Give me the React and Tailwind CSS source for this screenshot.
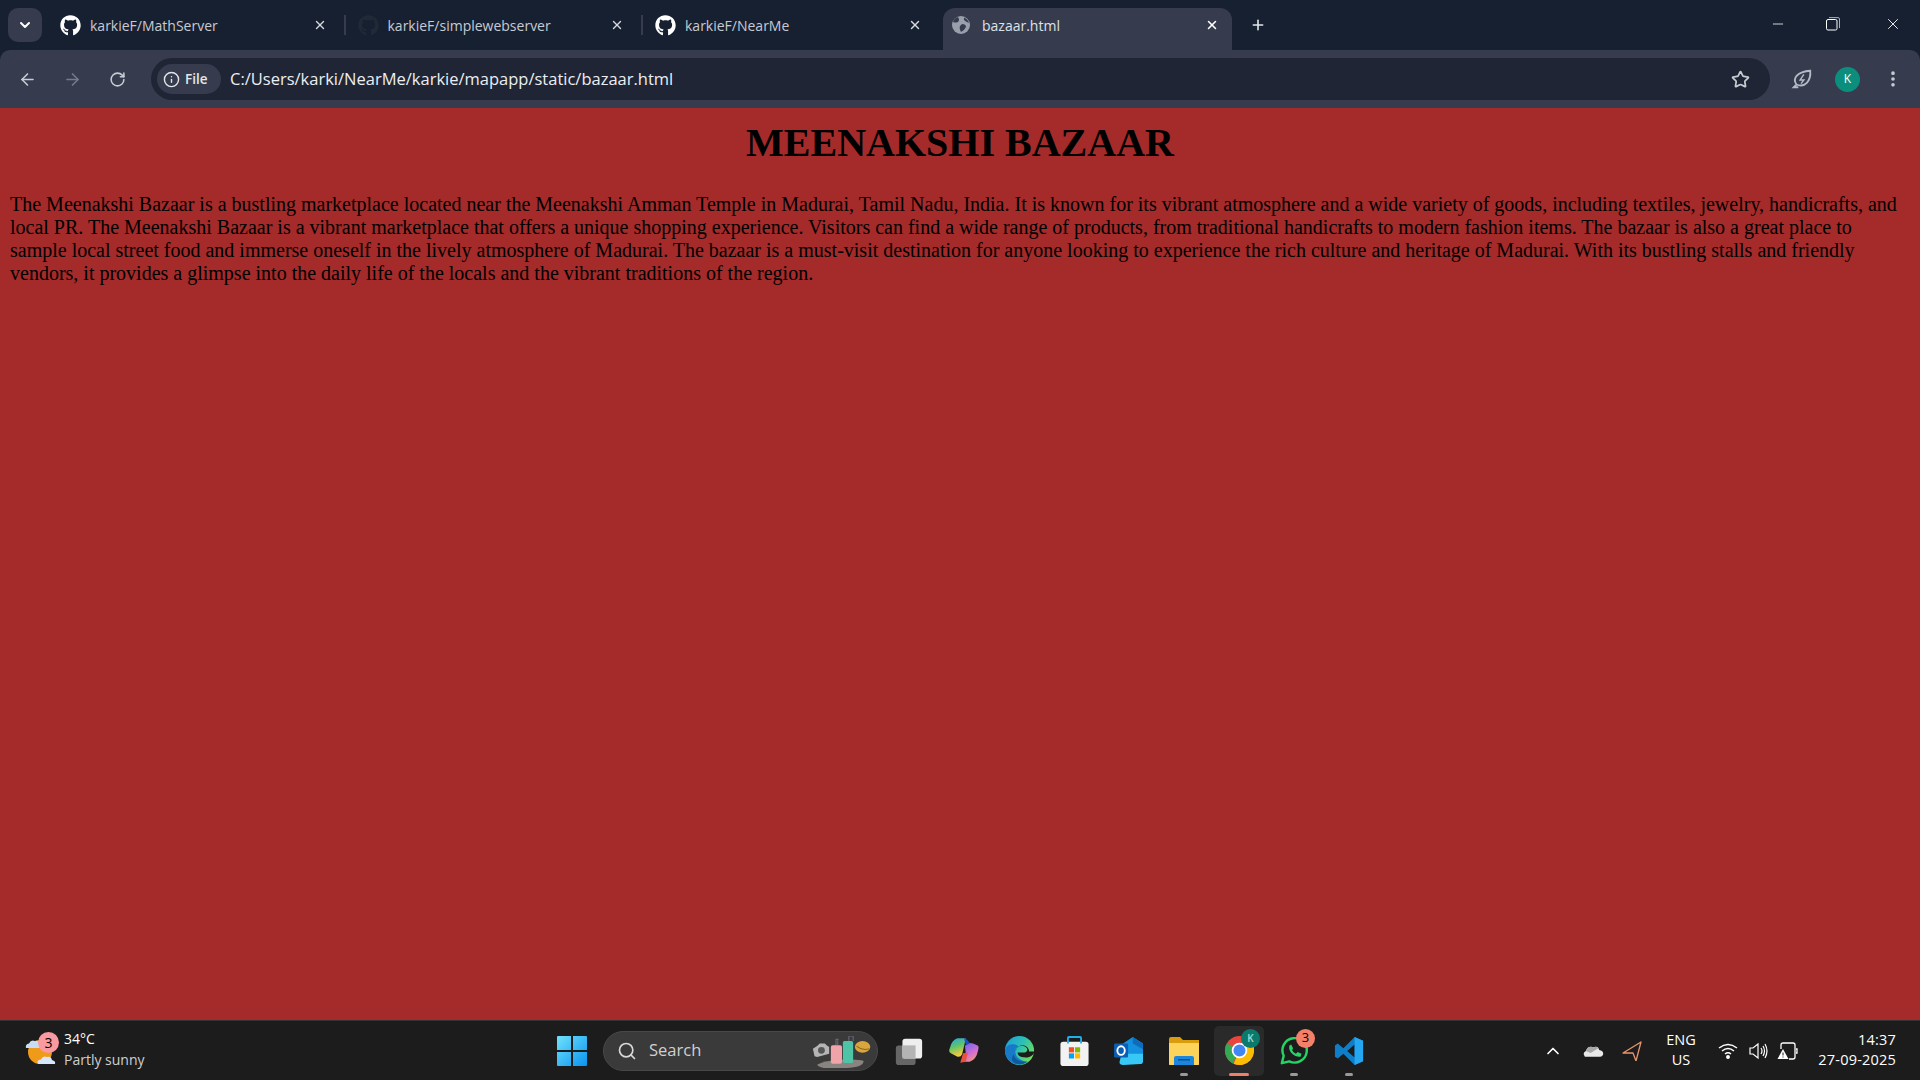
import React from "react";
import { FaGithub } from "react-icons/fa";
import { ArrowLeft, ArrowRight, RotateCw, Info, Star, X, Plus, ChevronDown, ChevronUp, Search, Minus, EllipsisVertical } from "lucide-react";

const ui = "font-['Open_Sans','Noto_Sans',sans-serif]";

function Tab({ title, dim, sep }) {
  return (
    <div className="relative flex h-[40px] w-[297.5px] shrink-0 items-center pl-[12px] pr-[19px]">
      <FaGithub className={`h-[21px] w-[21px] shrink-0 ${dim ? "text-[#222936]" : "text-white"}`} />
      <span className="ml-[9px] flex-1 text-[14px] text-[#c7cad3]">{title}</span>
      <X className="h-[14px] w-[14px] text-[#d8dae0]" strokeWidth={2.4} />
      {sep && <div className="absolute right-[0px] top-[10px] h-[20px] w-[2px] bg-[#363c4e]" />}
    </div>
  );
}

function Chrome() {
  return (
    <svg viewBox="0 0 32 32" className="h-[31px] w-[31px]">
      <circle cx="16" cy="16" r="15" fill="#e8453c" />
      <path d="M16 16 L3 8.5 A15 15 0 0 0 9 29.3 Z" fill="#34a853" />
      <path d="M16 16 L29 8.5 A15 15 0 0 1 10 29.8 Z" fill="#fbbc04" />
      <path d="M16 9 H29 A15 15 0 0 1 31 16 L23 16 Z" fill="#fbbc04" />
      <circle cx="16" cy="16" r="8" fill="#fff" />
      <circle cx="16" cy="16" r="6.2" fill="#4285f4" />
    </svg>
  );
}

function Slot({ children, dot, active }) {
  return (
    <div className={`relative flex h-[50px] w-[50px] items-center justify-center rounded-[5px] ${active ? "bg-[#2a2a2a]" : ""}`}>
      {children}
      {dot && <div className="absolute bottom-[0px] left-[21px] h-[3px] w-[8px] rounded-full bg-[#9a9a9a]" />}
      {active && <div className="absolute bottom-[0px] left-[15px] h-[3px] w-[20px] rounded-full bg-[#f0806a]" />}
    </div>
  );
}

export default function App() {
  return (
    <div className={`flex h-[1080px] w-[1920px] flex-col overflow-hidden bg-[#172031] ${ui}`}>
      {/* Tab strip */}
      <div className="flex h-[50px] shrink-0 items-start bg-[#172031]">
        <div className="ml-[8px] mt-[8px] flex h-[34px] w-[34px] items-center justify-center rounded-[10px] bg-[#363c4e]">
          <ChevronDown className="h-[16px] w-[16px] text-white" strokeWidth={3} />
        </div>
        <div className="ml-[6px] mt-[5px] flex">
          <Tab title="karkieF/MathServer" sep />
          <Tab title="karkieF/simplewebserver" dim sep />
          <Tab title="karkieF/NearMe" />
        </div>
        <div className="ml-[2.5px] mt-[8px] flex h-[42px] w-[289px] shrink-0 items-center rounded-t-[12px] bg-[#363c4e] pb-[8px] pl-[9px] pr-[13px]">
          <svg viewBox="0 0 18 18" className="h-[18px] w-[18px]">
            <circle cx="9" cy="9" r="9" fill="#9aa0ab" />
            <path d="M6 1 Q8 4 6 6 Q3 7 1 6 Q2 2 6 1 Z M10 8 Q14 8 14 11 Q12 15 9 16 Q7 12 8 10 Z M12 1.5 Q16 3 17 7 Q14 6 12 4 Z" fill="#363c4e" />
          </svg>
          <span className="ml-[12px] flex-1 text-[14px] text-[#dfe1e7]">bazaar.html</span>
          <X className="h-[14px] w-[14px] text-white" strokeWidth={2.6} />
        </div>
        <Plus className="ml-[18px] mt-[17px] h-[16px] w-[16px] text-[#e4e6ea]" strokeWidth={2.4} />
        <div className="ml-auto mt-[15px] flex items-center pr-[18px] text-white">
          <Minus className="h-[16px] w-[16px]" strokeWidth={1.2} />
          <svg viewBox="0 0 14 14" className="ml-[40px] h-[14px] w-[14px]" fill="none" stroke="#fff" strokeWidth="1">
            <rect x="0.5" y="2.5" width="10.5" height="10.5" rx="1.5" />
            <path d="M3 0.6 H12 A1.5 1.5 0 0 1 13.5 2 V11" stroke="#aab" />
          </svg>
          <X className="ml-[44px] h-[18px] w-[18px]" strokeWidth={1.2} />
        </div>
      </div>

      {/* Toolbar */}
      <div className="flex h-[58px] shrink-0 items-center rounded-t-[10px] bg-[#363c4e] pr-[14px]">
        <ArrowLeft className="ml-[18px] h-[19px] w-[19px] text-[#c8cbd2]" strokeWidth={2} />
        <ArrowRight className="ml-[26px] h-[19px] w-[19px] text-[#767b88]" strokeWidth={2} />
        <RotateCw className="ml-[27px] h-[17px] w-[17px] text-[#c8cbd2]" strokeWidth={2.2} />
        <div className="ml-[25px] flex h-[42px] w-[1619px] shrink-0 items-center rounded-full bg-[#1f2534] pl-[6px] pr-[20px]">
          <div className="flex h-[30px] w-[64px] items-center gap-[5px] rounded-full bg-[#363c4e] pl-[6px]">
            <Info className="h-[17px] w-[17px] text-[#e4e6ea]" strokeWidth={2} />
            <span className="text-[13.5px] font-semibold text-[#e4e6ea]">File</span>
          </div>
          <span className="ml-[9px] mt-[1px] flex-1 text-[16.5px] text-[#eceef2]">C:/Users/karki/NearMe/karkie/mapapp/static/bazaar.html</span>
          <Star className="h-[19px] w-[19px] text-[#c8cbd2]" strokeWidth={2.2} />
        </div>
        <svg viewBox="0 0 24 24" className="ml-[21px] h-[22px] w-[22px]" fill="none" stroke="#b6bac6" strokeWidth="2">
          <path d="M6 18 C1 11 7 4 21 3 C22 14 15 22 6 18 Z M6 18 L3 21 H8" />
          <path d="M14 7 L10 13 H14 L11 17" strokeWidth="1.6" />
        </svg>
        <div className="ml-[22px] flex h-[25px] w-[25px] items-center justify-center rounded-full bg-[#0b8e7b] text-[12px] text-white">K</div>
        <EllipsisVertical className="ml-[23px] h-[20px] w-[20px] text-[#c8cbd2]" strokeWidth={2.4} />
      </div>

      {/* Page */}
      <main className="min-h-0 flex-1 bg-[#a52a2a] px-[10px] font-['Liberation_Serif',serif] text-black">
        <h1 className="mt-[12px] text-center text-[40px] font-bold leading-[46px]">MEENAKSHI BAZAAR</h1>
        <p className="mt-[27px] text-[20px] leading-[23px]">
          The Meenakshi Bazaar is a bustling marketplace located near the Meenakshi Amman Temple in Madurai, Tamil Nadu, India. It is known for its vibrant atmosphere and a wide variety of goods, including textiles, jewelry, handicrafts, and local PR. The Meenakshi Bazaar is a vibrant marketplace that offers a unique shopping experience. Visitors can find a wide range of products, from traditional handicrafts to modern fashion items. The bazaar is also a great place to sample local street food and immerse oneself in the lively atmosphere of Madurai. The bazaar is a must-visit destination for anyone looking to experience the rich culture and heritage of Madurai. With its bustling stalls and friendly vendors, it provides a glimpse into the daily life of the locals and the vibrant traditions of the region.
        </p>
      </main>

      {/* Taskbar */}
      <div className="flex h-[60px] shrink-0 items-center border-t border-[#333] bg-[#1c1c1c] text-white">
        <div className="relative ml-[25px] h-[36px] w-[32px] shrink-0">
          <svg viewBox="0 0 32 36" className="h-[36px] w-[32px]">
            <circle cx="15" cy="19" r="12" fill="#f09a1a" />
            <path d="M1 15 Q0 11 4 10.5 Q6 6 10 8 Q14 7 15 11 Q18 12 17 15 Z" fill="#c7dcf5" />
            <path d="M13 31 Q11 27 16 26.5 Q18 22 22 24 Q26 23 27 27 Q31 28 30 31 Z" fill="#d7e6f8" />
          </svg>
          <div className="absolute left-[13px] top-[-1px] flex h-[21px] w-[21px] items-center justify-center rounded-full bg-[#f99aa0] text-[14px] text-black">3</div>
        </div>
        <div className="mb-[3px] ml-[7px] w-[90px] shrink-0 leading-[21px]">
          <div className="text-[14px]">34°C</div>
          <div className="whitespace-nowrap text-[14px] text-[#cfcfcf]">Partly sunny</div>
        </div>
        <svg viewBox="0 0 30 30" className="ml-[403px] h-[30px] w-[30px] shrink-0">
          <defs>
            <linearGradient id="win" x1="0" y1="0" x2="1" y2="1">
              <stop offset="0" stopColor="#6fe2fb" />
              <stop offset="1" stopColor="#0a93f0" />
            </linearGradient>
          </defs>
          <path d="M0 1 A1 1 0 0 1 1 0 H14 V14 H0 Z M16 0 H29 A1 1 0 0 1 30 1 V14 H16 Z M0 16 H14 V30 H1 A1 1 0 0 1 0 29 Z M16 16 H30 V29 A1 1 0 0 1 29 30 H16 Z" fill="url(#win)" />
        </svg>
        <div className="ml-[16px] flex h-[40px] w-[275px] shrink-0 items-center rounded-full border border-[#484848] bg-[#3a3a3a] pl-[13px]">
          <Search className="h-[20px] w-[20px] text-[#d8d8d8]" strokeWidth={2} />
          <span className="ml-[12px] flex-1 text-[16.5px] text-[#d0d0d0]">Search</span>
          <svg viewBox="0 0 70 38" preserveAspectRatio="none" className="mr-[5px] mt-[3px] h-[32px] w-[60px]">
            <path d="M6 34 Q14 29 38 28 Q60 28 60 30 Q60 37 40 38 H14 Q8 37 6 34 Z" fill="#8a8480" />
            <path d="M1 15 L6 12 L9 9 H15 L17 11 L20 13 V21 L6 25 L3 24 Z" fill="#b5b5b5" />
            <circle cx="11" cy="17" r="4" fill="#555" />
            <path d="M26 11 H28 V4 H31 M30 11 V5 M43 6 V0 H48 V6" fill="none" stroke="#667" strokeWidth="1.3" />
            <rect x="22" y="11" width="13" height="22" rx="2" fill="#f0a3a8" />
            <rect x="36" y="6" width="12" height="26" rx="2" fill="#4fc3a5" />
            <ellipse cx="59" cy="13" rx="9" ry="7" fill="#d9a53c" />
            <path d="M52 12 Q59 18 67 15" fill="none" stroke="#8a6a20" strokeWidth="1.2" />
          </svg>
        </div>
        <div className="ml-[6px] flex shrink-0 items-center gap-[5px]">
          <Slot>
            <svg viewBox="0 0 32 32" className="h-[30px] w-[30px]">
              <rect x="2" y="10" width="21" height="21" rx="3" fill="#666" />
              <rect x="9" y="3" width="21" height="21" rx="3" fill="#eeeeee" />
              <rect x="9" y="10" width="14" height="14" fill="#b4b4b4" />
            </svg>
          </Slot>
          <Slot>
            <svg viewBox="0 0 32 28" className="h-[27px] w-[30px]">
              <defs>
                <linearGradient id="cp1" x1="0" y1="0" x2="0.3" y2="1">
                  <stop offset="0" stopColor="#2aa4e8" />
                  <stop offset="0.5" stopColor="#5ec46c" />
                  <stop offset="1" stopColor="#f7c93c" />
                </linearGradient>
                <linearGradient id="cp2" x1="0.2" y1="0" x2="0.8" y2="1">
                  <stop offset="0" stopColor="#6a63ee" />
                  <stop offset="0.6" stopColor="#d670d0" />
                  <stop offset="1" stopColor="#f7a060" />
                </linearGradient>
              </defs>
              <path d="M9 1 H18 L14 18 Q12 22 8 20 L2 17 Q-1 16 1 11 Q3 3 9 1 Z" fill="url(#cp1)" />
              <path d="M17 9 L22 6 Q25 6 27 7 L31 9 Q32 10 31 14 Q29 24 22 26 H13 L15 24 Q17 23 18 18 Z" fill="url(#cp2)" />
              <path d="M16 1 Q19 1 22 6 L18 8 Z" fill="#1c4fc8" />
              <path d="M12 27 L15 17 L20 16 L18 26 Z" fill="#e8503f" />
            </svg>
          </Slot>
          <Slot>
            <svg viewBox="0 0 32 32" className="h-[31px] w-[31px]">
              <defs>
                <linearGradient id="ed" x1="0" y1="0" x2="1" y2="0.6">
                  <stop offset="0" stopColor="#1a9be0" />
                  <stop offset="0.55" stopColor="#2cc0b4" />
                  <stop offset="1" stopColor="#6fdc5c" />
                </linearGradient>
              </defs>
              <circle cx="16" cy="16" r="15" fill="url(#ed)" />
              <path d="M1 16 C2 9 12 8 15 12 C12 13 11 16 12 19 C13 24 18 27 24 27.5 C20 31 13 32 8 28 C3 25 1 21 1 16 Z" fill="#1779c8" />
              <path d="M10 20 C11 26 18 28 24 27.5 C19 31 12 31 9 27 C8 25 8 22 10 20 Z" fill="#0f5a9c" />
              <path d="M12 17 C12 12 19 9 23 13 C25 15 24 18 21 18 H14 Q14 22 20 23 C23 23.5 27 23 30 20 C31 19 31 18 31 17 L26 17 C25 9 14 8 12 17 Z" fill="#1c1c1c" />
            </svg>
          </Slot>
          <Slot>
            <svg viewBox="0 0 30 32" className="h-[30px] w-[29px]">
              <rect x="0" y="6" width="30" height="26" rx="3" fill="#f2f2f2" />
              <path d="M8 8 V2 Q8 1 9 1 H21 Q22 1 22 2 V8" fill="none" stroke="#20b0e8" strokeWidth="2" />
              <rect x="9" y="12" width="5.5" height="5.5" fill="#f25022" />
              <rect x="15.5" y="12" width="5.5" height="5.5" fill="#7fba00" />
              <rect x="9" y="18.5" width="5.5" height="5.5" fill="#00a4ef" />
              <rect x="15.5" y="18.5" width="5.5" height="5.5" fill="#ffb900" />
            </svg>
          </Slot>
          <Slot>
            <svg viewBox="0 0 32 30" className="h-[28px] w-[30px]">
              <path d="M8 8 L20 0 L31 7 V24 Q31 27 28 27 H8 Z" fill="#1490df" />
              <path d="M20 0 L31 7 V13 L20 7 Z" fill="#0f6cbd" />
              <path d="M10 30 Q5 30 6 26 L8 18 H31 V26 Q31 29 28 29 Z" fill="#38c8f5" />
              <rect x="0" y="7" width="15" height="15" rx="1.5" fill="#0a5fb4" />
              <ellipse cx="7.5" cy="14.5" rx="4" ry="4.6" fill="none" stroke="#fff" strokeWidth="2" />
            </svg>
          </Slot>
          <Slot dot>
            <svg viewBox="0 0 30 28" className="h-[28px] w-[30px]">
              <path d="M0 2 Q0 0 2 0 H11 L14 3 H30 V27 Q30 28 29 28 H1 Q0 28 0 27 Z" fill="#d99c0c" />
              <path d="M0 6 H30 V27 Q30 28 29 28 H1 Q0 28 0 27 Z" fill="#fcd45c" />
              <path d="M5 21 Q5 19 7 19 H23 Q25 19 25 21 V28 H5 Z" fill="#1b87dc" />
              <rect x="9" y="22" width="12" height="1.5" fill="#0c4f8c" />
            </svg>
          </Slot>
          <Slot active>
            <Chrome />
            <div className="absolute right-[4px] top-[3px] flex h-[19px] w-[19px] items-center justify-center rounded-full bg-[#0b7a6c] text-[10px] font-semibold text-[#a8dcd4]">K</div>
          </Slot>
          <Slot dot>
            <svg viewBox="0 0 32 32" className="h-[30px] w-[30px]" fill="none">
              <path d="M3 29 L5 21 A13 13 0 1 1 11 27 Z" stroke="#25d366" strokeWidth="2.6" strokeLinejoin="round" />
              <path d="M11 10 L13 9 L15 13 L14 15 Q15 18 18 19 L20 17 L24 19 L23 22 Q18 23 14 19 Q10 15 11 10 Z" fill="#25d366" />
            </svg>
            <div className="absolute right-[4px] top-[3px] flex h-[19px] w-[19px] items-center justify-center rounded-full bg-[#f5806a] text-[13px] text-black">3</div>
          </Slot>
          <Slot dot>
            <svg viewBox="0 0 32 32" className="h-[30px] w-[30px]">
              <path d="M22 1 L31 5 V27 L22 31 L10 19 L4 24 L1 22 V10 L4 8 L10 13 Z M22 9 L14 16 L22 23 Z" fill="#0f7ec9" fillRule="evenodd" />
              <path d="M22 1 L31 5 V27 L22 31 Z" fill="#22a7f0" />
            </svg>
          </Slot>
        </div>
        <ChevronUp className="ml-[169px] h-[20px] w-[20px] shrink-0 text-white" strokeWidth={2} />
        <svg viewBox="0 0 22 14" className="ml-[20px] h-[14px] w-[21px] shrink-0">
          <path d="M2 13 Q-1 9 3 7 Q5 1 11 3 Q16 1 17 6 Q22 7 21 11 Q20 13 18 13 Z" fill="#e8e8e8" />
          <path d="M3 7 Q5 1 11 3 Q14 2 16 4 L8 9 Z" fill="#a8a8a8" />
        </svg>
        <svg viewBox="0 0 20 20" className="ml-[18px] h-[20px] w-[20px] shrink-0" fill="none" stroke="#e8956d" strokeWidth="1.3" strokeLinejoin="round">
          <path d="M19 1 L1 12 L11 12 L14 20 Z" />
        </svg>
        <div className="mb-[2px] ml-[19px] w-[40px] shrink-0 text-center text-[14.5px] leading-[20px]">
          <div>ENG</div>
          <div>US</div>
        </div>
        <svg viewBox="0 0 20 16" className="ml-[17px] h-[16px] w-[20px] shrink-0" fill="none" stroke="#fff" strokeWidth="1.5">
          <path d="M1 5 Q10 -2 19 5" />
          <path d="M4 8 Q10 3 16 8" />
          <path d="M7 11 Q10 8.5 13 11" />
          <circle cx="10" cy="14" r="1.2" fill="#fff" />
        </svg>
        <svg viewBox="0 0 20 18" className="ml-[11px] h-[18px] w-[20px] shrink-0" fill="none" stroke="#fff" strokeWidth="1.2">
          <path d="M1 6 H4 L9 2 V16 L4 12 H1 Z" />
          <path d="M12 6 Q14 9 12 12 M14 4 Q17 9 14 14 M16 2 Q20 9 16 16" />
        </svg>
        <svg viewBox="0 0 21 18" className="ml-[8px] h-[18px] w-[21px] shrink-0" fill="none" stroke="#fff" strokeWidth="1.3">
          <path d="M4 7 V3 Q4 1 6 1 H16 Q18 1 18 3 V15 Q18 17 16 17 H12" />
          <path d="M19 7 H20 V11 H19" />
          <path d="M6 7 L0.5 17 H11.5 Z" fill="#fff" stroke="none" />
          <rect x="5.5" y="10.5" width="1" height="3" fill="#1c1c1c" stroke="none" />
          <rect x="5.5" y="14.5" width="1" height="1" fill="#1c1c1c" stroke="none" />
        </svg>
        <div className="mb-[2px] ml-auto mr-[24px] shrink-0 text-right text-[14.5px] leading-[20px] tracking-[0.2px]">
          <div>14:37</div>
          <div>27-09-2025</div>
        </div>
      </div>
    </div>
  );
}
